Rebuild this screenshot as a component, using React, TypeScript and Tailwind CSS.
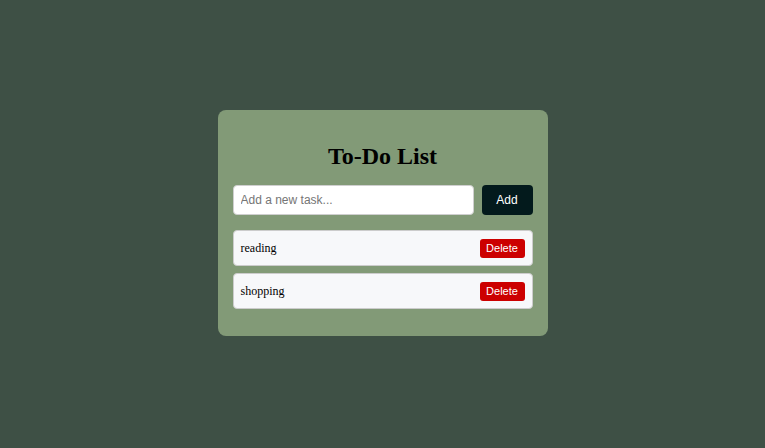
import { useState } from "react";

interface Task {
  id: number;
  text: string;
}

export default function App() {
  const [tasks, setTasks] = useState<Task[]>([
    { id: 1, text: "reading" },
    { id: 2, text: "shopping" },
  ]);
  const [draft, setDraft] = useState("");

  const addTask = () => {
    if (!draft.trim()) return;
    setTasks([...tasks, { id: Date.now(), text: draft.trim() }]);
    setDraft("");
  };

  return (
    <main className="flex min-h-screen items-start justify-center bg-[#3e5045] pt-[110px]">
      <div className="w-[330px] rounded-[8px] bg-[#829a77] px-[15px] pt-[32px] pb-[27px]">
        <h2 className="mb-[15px] text-center font-['Liberation_Serif',serif] text-[24px] font-bold leading-[28px] text-black">
          To-Do List
        </h2>

        <div className="flex gap-[8px]">
          <input
            value={draft}
            onChange={(e) => setDraft(e.target.value)}
            placeholder="Add a new task..."
            className="h-[30px] w-[241px] rounded-[4px] border border-[#cfcfcf] bg-white px-[7px] font-['Liberation_Sans',Arial,sans-serif] text-[12px] text-black placeholder:text-[#757575] focus:outline-none"
          />
          <button
            onClick={addTask}
            className="h-[30px] w-[51px] rounded-[4px] bg-[#031a1c] font-['Liberation_Sans',Arial,sans-serif] text-[12px] text-white"
          >
            Add
          </button>
        </div>

        <ul className="mt-[15px] flex flex-col gap-[7px]">
          {tasks.map((task) => (
            <li
              key={task.id}
              className="flex h-[36px] items-center justify-between rounded-[4px] border border-[#cccccc] bg-[#f7f8fa] pr-[7px] pl-[7px]"
            >
              <span className="font-['Liberation_Serif',serif] text-[12px] text-black">
                {task.text}
              </span>
              <button
                onClick={() => setTasks(tasks.filter((t) => t.id !== task.id))}
                className="h-[19px] w-[45px] rounded-[3px] bg-[#cc0000] font-['Liberation_Sans',Arial,sans-serif] text-[11px] text-white"
              >
                Delete
              </button>
            </li>
          ))}
        </ul>
      </div>
    </main>
  );
}
